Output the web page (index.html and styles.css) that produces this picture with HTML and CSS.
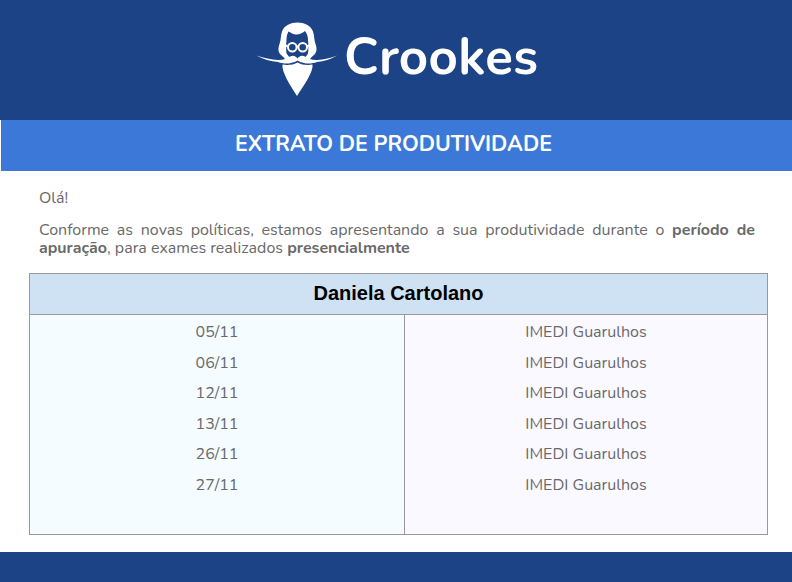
FILE: index.html
```html
<!DOCTYPE html>
<html lang="pt-BR">
<head>
<meta charset="utf-8">
<title>Extrato de Produtividade</title>
<link rel="stylesheet" href="styles.css">
</head>
<body>
<header class="top">
  <div class="logo">
    <svg class="mark" viewBox="250 18 90 82" width="90" height="82" aria-hidden="true">
      <path class="w" d="M285.500 60C284 57 282 56 280.500 54.500C278 52 278 48 279.500 44C281 40 280.500 36 282 31.500C284 25.500 291 22.500 297.500 22.500C304 22.500 311 25.500 313 31.500C314.500 36 314 40 315.500 44C317 48 317 52 314.500 54.500C313 56 311 57 309.500 60L305 58L308 53.500C308.500 50 308.500 44 308 40C308 36.500 307 33.500 305 31C302 33.500 298.500 35 295.500 34.500C292.500 34 290.500 32.500 288.500 31.500C287 34 286.500 37 286.500 40C286 44 286 50 286.500 53.500L290 58Z"/>
      <path class="w" d="M256.500 55.500C264 58 271 59.800 278 60C283 60.200 287 58.500 290 56.500C292.500 55 295.500 55.500 297.500 58.500C299.500 55.500 302.500 55 305 56.500C308 58.500 312 60.200 317 60C324 59.800 331 58 337 55.500C331 59 324 61.500 317 62C313 63.500 308 64 304 63C301.500 62.500 299 61.500 297.500 60.500C296 61.500 293.500 62.500 291 63C287 64 282 63.500 278 62C271 61.500 263 59 256.500 55.500Z"/>
      <path class="w" d="M282.500 64.500C287 65.500 293.500 65 297.500 62.500C301.500 65 308 65.500 312.500 64.500C313.500 72 304 85 297 96C290 85 281.500 72 282.500 64.500Z"/>
      <g class="g">
        <circle cx="292.300" cy="47.300" r="4.300"/>
        <circle cx="302.700" cy="47.300" r="4.300"/>
        <path d="M296.500 46.500H298.500M288 46.500L286 45.500M307 46.500L309 45.500"/>
      </g>
    </svg>
    <span class="brand">Crookes</span>
  </div>
</header>
<h1 class="banner">EXTRATO DE PRODUTIVIDADE</h1>
<main class="content">
  <p class="hello">Olá!</p>
  <p class="intro">Conforme as novas políticas, estamos apresentando a sua produtividade durante o <strong>período de apuração</strong>, para exames realizados <strong>presencialmente</strong></p>
</main>
<section class="report">
  <h2 class="name">Daniela Cartolano</h2>
  <div class="cols">
    <ul class="col dates">
      <li>05/11</li><li>06/11</li><li>12/11</li><li>13/11</li><li>26/11</li><li>27/11</li>
    </ul>
    <ul class="col places">
      <li>IMEDI Guarulhos</li><li>IMEDI Guarulhos</li><li>IMEDI Guarulhos</li><li>IMEDI Guarulhos</li><li>IMEDI Guarulhos</li><li>IMEDI Guarulhos</li>
    </ul>
  </div>
</section>
<footer class="bottom"></footer>
</body>
</html>
```
FILE: styles.css
```css
* { box-sizing: border-box; }
html, body { margin: 0; padding: 0; }
body {
  width: 792px;
  height: 582px;
  overflow: hidden;
  background: #fff;
  font-family: "Nunito", "Lato", "Open Sans", sans-serif;
  color: #696969;
  font-size: 16px;
}
.top {
  height: 120px;
  background: #1c4386;
  display: flex;
  padding-left: 250px;
  padding-top: 18px;
}
.logo { display: flex; align-items: flex-start; }
.mark { display: block; }
.w { fill: #fff; }
.g { fill: none; stroke: #fff; stroke-width: 2; }
.brand {
  font-family: "Nunito", "Lato", sans-serif;
  font-weight: 700;
  font-size: 51px;
  letter-spacing: 0.3px;
  color: #fff;
  margin-left: 4px;
  margin-top: 9px;
  line-height: 60px;
}
.banner {
  margin: 0 0 0 1px;
  height: 51px;
  background: #3c78d8;
  color: #fff;
  font-size: 21.330px;
  font-weight: 700;
  line-height: 48px;
  text-align: center;
  padding-right: 6px;
}
.content { padding: 17px 37px 0 39px; }
.hello { margin: 0 0 13px; line-height: 20px; }
.intro { margin: 0; line-height: 18px; text-align: justify; }
.report {
  margin: 16px 24px 0 29px;
  height: 262px;
  border: 1px solid #999;
  display: flex;
  flex-direction: column;
}
.name {
  margin: 0;
  height: 41px;
  flex: none;
  background: #cfe2f3;
  border-bottom: 1px solid #999;
  font-family: "Liberation Sans", Arial, sans-serif;
  font-size: 20px;
  font-weight: 700;
  color: #000;
  text-align: center;
  line-height: 39px;
}
.cols { flex: 1; display: grid; grid-template-columns: 375px 1fr; }
.col { margin: 0; padding: 2px 0 0; list-style: none; text-align: center; }
.col li { height: 30.500px; line-height: 30px; }
.dates { background: #f4fcff; border-right: 1px solid #999; }
.places { background: #f9f9ff; }
.bottom { margin-top: 17px; height: 30px; background: #1c4386; }
```
